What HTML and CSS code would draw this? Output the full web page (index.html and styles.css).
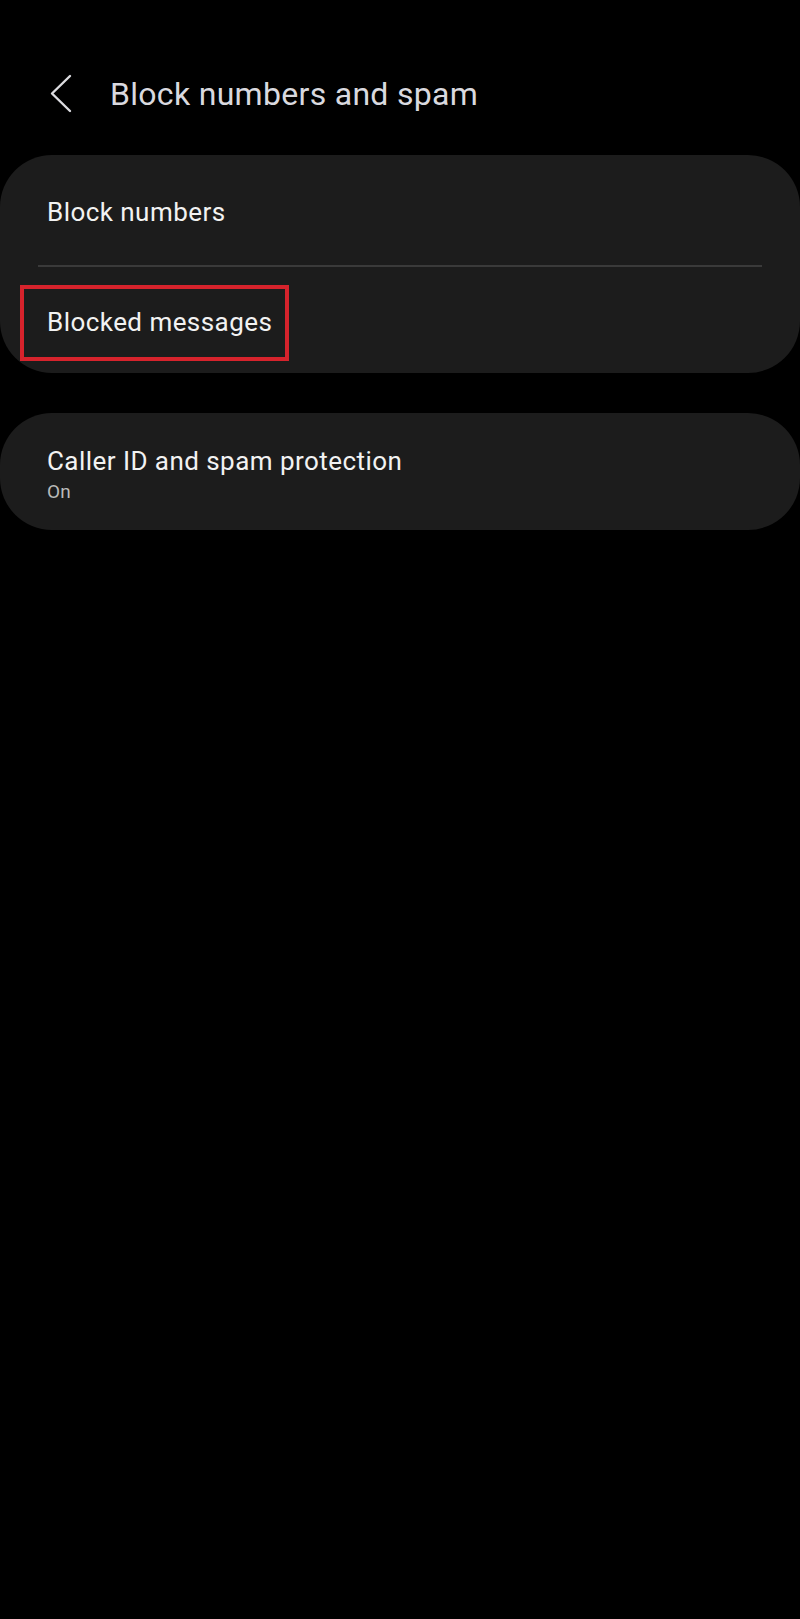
FILE: index.html
```html
<!DOCTYPE html>
<html lang="en">
<head>
<meta charset="utf-8">
<title>Block numbers and spam</title>
<link rel="stylesheet" href="styles.css">
</head>
<body>
<div class="screen">
  <header class="appbar">
    <svg class="back" width="24" height="40" viewBox="0 0 24 40" aria-hidden="true">
      <polyline points="20,2 2,19.5 20,37" fill="none" stroke="#dcdce0" stroke-width="2.4" stroke-linecap="round" stroke-linejoin="round"/>
    </svg>
    <h1 class="title">Block numbers and spam</h1>
  </header>

  <section class="card">
    <div class="row row-first"><span class="label">Block numbers</span></div>
    <div class="divider"></div>
    <div class="row row-second">
      <span class="label">Blocked messages</span>
      <span class="highlight"></span>
    </div>
  </section>

  <section class="card card-two">
    <div class="row-double">
      <span class="label">Caller ID and spam protection</span>
      <span class="sub">On</span>
    </div>
  </section>
</div>
</body>
</html>
```

FILE: styles.css
```css
html, body {
  margin: 0;
  padding: 0;
  background: #000;
}
body {
  width: 800px;
  height: 1619px;
  font-family: Roboto, "Noto Sans", "Liberation Sans", sans-serif;
  color: #f2f2f2;
}
.screen {
  display: flex;
  flex-direction: column;
}
.appbar {
  display: flex;
  align-items: center;
  height: 68px;
  margin-top: 60px;
  padding-left: 50px;
}
.back {
  flex: none;
}
.title {
  margin: 0 0 0 36px;
  font-size: 32px;
  font-weight: 400;
  color: #d9d9df;
  letter-spacing: 0.3px;
}
.card {
  margin-top: 27px;
  background: #1c1c1c;
  border-radius: 52px;
}
.card-two {
  margin-top: 40px;
}
.row {
  position: relative;
  display: flex;
  align-items: center;
  padding-left: 47px;
  box-sizing: border-box;
  padding-top: 4px;
}
.row-first {
  height: 110px;
}
.row-second {
  height: 106px;
}
.label {
  font-size: 26px;
  line-height: 30px;
  letter-spacing: 0.45px;
  color: #f2f2f2;
}
.divider {
  height: 2px;
  margin: 0 38px;
  background: #3a3a3a;
}
.highlight {
  position: absolute;
  left: 20px;
  top: 18px;
  width: 261px;
  height: 68px;
  border: 4px solid #d6232c;
}
.row-double {
  height: 117px;
  box-sizing: border-box;
  padding-top: 6px;
  display: flex;
  flex-direction: column;
  justify-content: center;
  padding-left: 47px;
}
.sub {
  font-size: 19px;
  line-height: 24px;
  letter-spacing: 0.3px;
  color: #b9b9b9;
  margin-top: 4px;
}
```
